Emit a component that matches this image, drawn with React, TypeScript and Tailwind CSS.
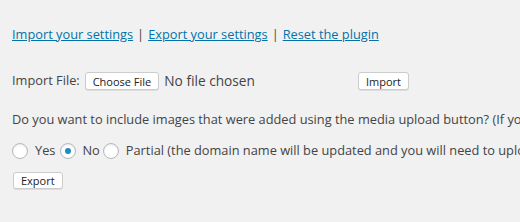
export default function App() {
  return (
    <div className="h-[222px] w-[520px] overflow-hidden bg-[#f1f1f1] pl-3 pt-[25px] text-[12.8px] text-[#444] font-['Open_Sans',sans-serif] whitespace-nowrap">
      <div className="flex items-center gap-[4px] leading-[19px]">
        <a href="#" className="text-[#0073aa] underline">Import your settings</a>
        <span>|</span>
        <a href="#" className="text-[#0073aa] underline">Export your settings</a>
        <span>|</span>
        <a href="#" className="text-[#0073aa] underline">Reset the plugin</a>
      </div>
      <div className="mt-[28px] flex items-center h-[18px]">
        <span>Import File:</span>
        <button className="ml-[5px] h-[18px] shrink-0 rounded-[3px] border border-[#ccc] bg-white px-[7px] text-[11px] leading-none text-[#222] shadow-[0_1px_0_#ddd]">Choose File</button>
        <span className="ml-[5px] text-[13.7px]">No file chosen</span>
        <button className="ml-[103px] h-[18px] shrink-0 rounded-[3px] border border-[#ccc] bg-white px-[7px] text-[11px] leading-none text-[#222] shadow-[0_1px_0_#ddd]">Import</button>
      </div>
      <p className="mt-[20px] leading-[19px]">Do you want to include images that were added using the media upload button? (If you</p>
      <div className="mt-[14px] flex items-center h-[16px]">
        <span className="h-[16px] w-[16px] shrink-0 rounded-full border border-[#b4b9be] bg-white shadow-[inset_0_1px_2px_rgba(0,0,0,0.1)]" />
        <span className="ml-[7px]">Yes</span>
        <span className="ml-[5px] flex h-[16px] w-[16px] shrink-0 items-center justify-center rounded-full border border-[#b4b9be] bg-white shadow-[inset_0_1px_2px_rgba(0,0,0,0.1)]">
          <span className="h-[6px] w-[6px] rounded-full bg-[#1e8cbe]" />
        </span>
        <span className="ml-[6px]">No</span>
        <span className="ml-[3px] h-[16px] w-[16px] shrink-0 rounded-full border border-[#b4b9be] bg-white shadow-[inset_0_1px_2px_rgba(0,0,0,0.1)]" />
        <span className="ml-[7px]">Partial (the domain name will be updated and you will need to upload</span>
      </div>
      <button className="mt-[13px] ml-px block h-[17px] rounded-[3px] border border-[#ccc] bg-white px-[7px] text-[11px] leading-none text-[#222] shadow-[0_1px_0_#ddd]">Export</button>
    </div>
  );
}
